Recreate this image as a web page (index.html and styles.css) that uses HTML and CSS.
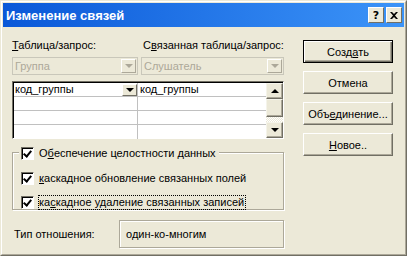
FILE: index.html
```html
<!DOCTYPE html>
<html lang="ru">
<head>
  <meta charset="UTF-8" />
  <title>Изменение связей</title>
  <link rel="stylesheet" href="styles.css">
</head>
<body>

  <div class="window">
    <div class="frame">
      <div class="titlebar">
        <span class="title">Изменение связей</span>
        <div class="title-btns">
          <span class="tbtn">?</span>
          <span class="tbtn close">
            <svg width="8" height="7" viewBox="0 0 8 7"><path d="M0 0h2l2 2 2-2h2L5 3.5 8 7H6L4 5 2 7H0l3-3.5z" fill="#000"/></svg>
          </span>
        </div>
      </div>

      <div class="client">
        <!-- left side -->
        <div class="left">
          <div class="labels">
            <span class="lbl-a"><u>Т</u>аблица/запрос:</span>
            <span class="lbl-b">С<u>в</u>язанная таблица/запрос:</span>
          </div>

          <div class="combos">
            <div class="combo c1">
              <span>Группа</span>
              <span class="drop"><i class="arrow gray"></i></span>
            </div>
            <div class="combo c2">
              <span>Слушатель</span>
              <span class="drop"><i class="arrow gray"></i></span>
            </div>
          </div>

          <div class="grid">
            <div class="rows">
              <div class="row">
                <div class="cell col1">код_группы<span class="cell-drop"><i class="arrow"></i></span></div>
                <div class="cell col2">код_группы</div>
              </div>
              <div class="row"><div class="cell col1"></div><div class="cell col2"></div></div>
              <div class="row"><div class="cell col1"></div><div class="cell col2"></div></div>
              <div class="row"><div class="cell col1"></div><div class="cell col2"></div></div>
            </div>
            <div class="scroll">
              <span class="sbtn"><i class="arrow up"></i></span>
              <span class="thumb"></span>
              <span class="track"></span>
              <span class="sbtn"><i class="arrow"></i></span>
            </div>
          </div>

          <div class="group">
            <label class="check legend"><span class="box"></span>О<u>б</u>еспечение целостности данных</label>
            <label class="check"><span class="box"></span><span><u>к</u>аскадное обновление связанных полей</span></label>
            <label class="check"><span class="box"></span><span class="focus">ка<u>с</u>кадное удаление связанных записей</span></label>
          </div>

          <div class="relation">
            <span class="rel-label">Тип отношения:</span>
            <span class="rel-value">один-ко-многим</span>
          </div>
        </div>

        <!-- buttons -->
        <div class="buttons">
          <button class="btn default">Созд<u>а</u>ть</button>
          <button class="btn">Отмена</button>
          <button class="btn">Объ<u>е</u>динение...</button>
          <button class="btn"><u>Н</u>овое..</button>
        </div>
      </div>
    </div>
  </div>

</body>
</html>
```

FILE: styles.css
```css
body {
  margin: 0;
  font-family: "Liberation Sans", Arial, sans-serif;
  font-size: 11px;
  color: #000;
  background: #ece9d8;
}

.window {
  width: 407px;
  height: 256px;
  box-sizing: border-box;
  border: 1px solid;
  border-color: #ece9d8 #716f64 #716f64 #ece9d8;
  background: #ece9d8;
}

.frame {
  height: 100%;
  box-sizing: border-box;
  border: 1px solid;
  border-color: #fff #aca899 #aca899 #fff;
  padding: 1px;
}

/* title bar */
.titlebar {
  height: 24px;
  display: flex;
  align-items: center;
  justify-content: space-between;
  padding: 0 2px 0 3px;
  background: linear-gradient(to right, #0a58d8, #3c94f8);
}

.title {
  color: #fff;
  font-family: "Liberation Sans", Arial, sans-serif;
  font-weight: bold;
  font-size: 13px;
}

.title-btns {
  display: flex;
  gap: 2px;
}

.tbtn {
  width: 16px;
  height: 16px;
  box-sizing: border-box;
  display: flex;
  align-items: center;
  justify-content: center;
  background: #ece9d8;
  border: 1px solid;
  border-color: #fff #716f64 #716f64 #fff;
  font-family: "DejaVu Sans", sans-serif;
  font-weight: bold;
  font-size: 11px;
}

/* client area */
.client {
  display: flex;
  padding: 12px 0 0 9px;
}

.left {
  width: 272px;
}

.labels {
  display: flex;
  line-height: 13px;
  height: 18px;
}

.lbl-a {
  width: 131px;
}

.combos {
  display: flex;
  gap: 3px;
}

.combo {
  height: 18px;
  box-sizing: border-box;
  display: flex;
  align-items: center;
  justify-content: space-between;
  border: 1px solid #c9c7ba;
  color: #aca899;
  padding-left: 2px;
}

.c1 { width: 126px; }
.c2 { width: 143px; }

.drop {
  width: 15px;
  height: 14px;
  margin-right: 1px;
  box-sizing: border-box;
  display: flex;
  align-items: center;
  justify-content: center;
  background: #ece9d8;
  border: 1px solid;
  border-color: #fff #aca899 #aca899 #fff;
}

.arrow {
  width: 0;
  height: 0;
  border-left: 4px solid transparent;
  border-right: 4px solid transparent;
  border-top: 4px solid #000;
}

.arrow.gray { border-top-color: #aca899; }

.arrow.up {
  border-top: 0;
  border-bottom: 4px solid #000;
}

/* grid */
.grid {
  margin-top: 6px;
  width: 272px;
  height: 58px;
  box-sizing: border-box;
  display: flex;
  border: 1px solid;
  border-color: #716f64 #fff #fff #716f64;
  box-shadow: inset 1px 1px 0 #000;
  padding: 1px 0 0 1px;
  background: #fff;
}

.rows {
  flex: 1;
}

.row {
  display: flex;
  height: 14px;
  box-sizing: border-box;
  border-bottom: 1px solid #c0c0c0;
}

.row:last-child { border-bottom: 0; }

.cell {
  line-height: 13px;
  padding-left: 1px;
  box-sizing: border-box;
}

.col1 {
  width: 124px;
  border-right: 1px solid #c0c0c0;
  display: flex;
  justify-content: space-between;
}

.col2 { flex: 1; padding-left: 2px; }

.cell-drop {
  width: 15px;
  height: 12px;
  box-sizing: border-box;
  display: flex;
  align-items: center;
  justify-content: center;
  background: #ece9d8;
  border: 1px solid;
  border-color: #fff #716f64 #716f64 #fff;
  margin-top: 1px;
}

.scroll {
  width: 17px;
  display: flex;
  flex-direction: column;
}

.sbtn, .thumb {
  box-sizing: border-box;
  background: #ece9d8;
  border: 1px solid;
  border-color: #f5f4ea #716f64 #716f64 #f5f4ea;
  box-shadow: inset -1px -1px 0 #aca899;
}

.sbtn {
  height: 16px;
  display: flex;
  align-items: center;
  justify-content: center;
}

.thumb { height: 18px; }

.track {
  flex: 1;
  background: repeating-conic-gradient(#fff 0 25%, #ece9d8 0 50%) 0 0 / 2px 2px;
}

/* checkbox group */
.group {
  margin-top: 13px;
  height: 58px;
  box-sizing: border-box;
  border: 1px solid #aca899;
  box-shadow: 1px 1px 0 #fff, inset 1px 1px 0 #fff;
  padding: 8px 0 0 8px;
  position: relative;
}

.check {
  display: flex;
  align-items: center;
  height: 13px;
  line-height: 13px;
  margin-bottom: 11px;
}

.check.legend {
  position: absolute;
  top: -6px;
  left: 6px;
  padding: 0 3px 0 2px;
  background: #ece9d8;
  margin: 0;
}

.group .check:nth-child(2) { margin-top: 11px; }

.box {
  width: 13px;
  height: 13px;
  box-sizing: border-box;
  margin-right: 5px;
  border: 1px solid;
  border-color: #716f64 #fff #fff #716f64;
  box-shadow: inset 1px 1px 0 #000;
  background: #fff;
  position: relative;
}

.box::after {
  content: "";
  position: absolute;
  left: 2px;
  top: 1px;
  width: 3px;
  height: 6px;
  border: solid #000;
  border-width: 0 2px 2px 0;
  transform: translate(1px, 0) rotate(40deg);
}

.focus {
  outline: 1px dotted #000;
  outline-offset: 0;
  padding-right: 1px;
}

/* relation type */
.relation {
  display: flex;
  align-items: center;
  margin-top: 10px;
}

.rel-label {
  width: 105px;
  padding-left: 2px;
}

.rel-value {
  width: 165px;
  height: 28px;
  box-sizing: border-box;
  display: flex;
  align-items: center;
  padding-left: 6px;
  border: 1px solid #aca899;
  box-shadow: inset 1px 1px 0 #fff, 1px 1px 0 #fff;
}

/* buttons */
.buttons {
  display: flex;
  flex-direction: column;
  gap: 8px;
  margin-left: 19px;
  margin-top: 1px;
}

.btn {
  width: 90px;
  height: 23px;
  font-family: "Liberation Sans", Arial, sans-serif;
  font-size: 11px;
  background: #ece9d8;
  border: 1px solid;
  border-color: #fff #716f64 #716f64 #fff;
  box-shadow: inset -1px -1px 0 #aca899;
  padding: 0;
  color: #000;
}

.btn.default {
  border: 1px solid #000;
  box-shadow: inset 1px 1px 0 #fff, inset -1px -1px 0 #716f64, inset -2px -2px 0 #aca899;
}
```
